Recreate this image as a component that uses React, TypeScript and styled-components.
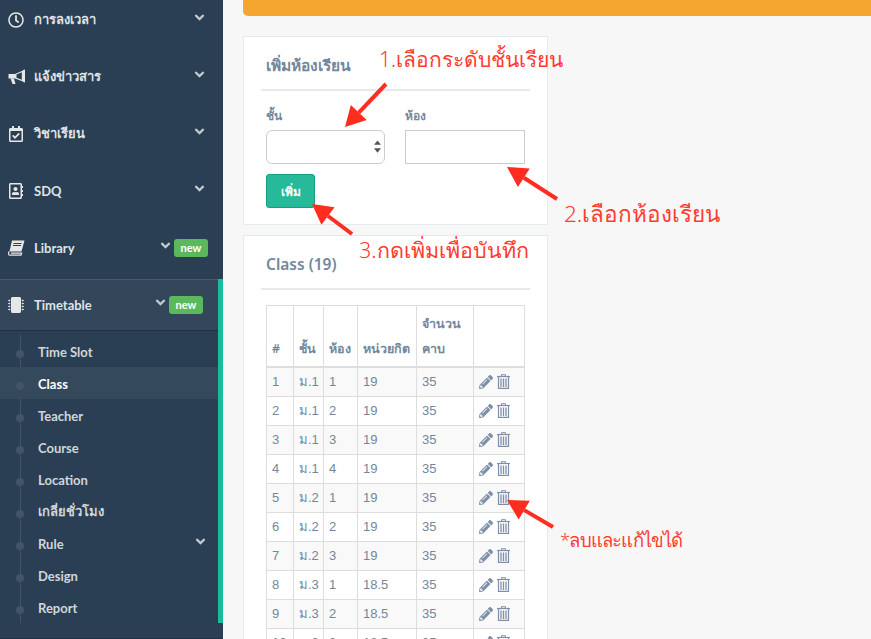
import styled, { createGlobalStyle } from 'styled-components';
import { FaAngleDown, FaMicrochip, FaPencilAlt, FaRegAddressBook, FaRegCalendarCheck, FaRegClock } from 'react-icons/fa';

const FONT = '"Noto Sans", "Open Sans", "Liberation Sans", sans-serif';
const NAV_FONT = 'Lato, "Noto Sans", sans-serif';
const TABLE_FONT = '"Liberation Sans", "Noto Sans", sans-serif';

const BullhornIcon = () => (
	<svg width='18' height='16' viewBox='0 0 18 16' fill='none'>
		<path d='M0.5 5 H7 L15 1.5 V12.5 L7 9.5 H0.5 Z' fill='#e7e7e7' />
		<path d='M2.5 9.5 H6 L7.5 15 H4.5 Z' fill='#e7e7e7' />
		<path d='M8.5 5.5 L13.8 3.2 V10.8 L8.5 8.8 Z' fill='#2a3f54' />
		<path d='M15 1 L17 0.5 V13.5 L15 13 Z' fill='#e7e7e7' />
	</svg>
);

const BookIcon = () => (
	<svg width='17' height='16' viewBox='0 0 17 16' fill='none'>
		<path d='M4 0.5 H16.5 L13.5 11.5 H1.5 Z' fill='#e7e7e7' />
		<path d='M5.5 3.5 H13.5 M5 5.5 H13' stroke='#2a3f54' strokeWidth='1' />
		<path d='M1.5 11.5 C0 12.5 0.2 15.2 2 15.2 H13 L13.6 13.2 H3' stroke='#e7e7e7' strokeWidth='1.2' />
	</svg>
);

const TrashIcon = () => (
	<svg width='13' height='15' viewBox='0 0 13 15' fill='none' stroke='currentColor'>
		<path d='M0 2.5 H13' strokeWidth='1.2' />
		<path d='M4.5 2.5 V0.7 H8.5 V2.5' strokeWidth='1' />
		<path d='M1.5 3 V14.3 H11.5 V3' strokeWidth='1.2' />
		<path d='M4 4.5 V13 M6.5 4.5 V13 M9 4.5 V13' strokeWidth='1.3' />
	</svg>
);

const menu = [
	{ label: 'การลงเวลา', icon: <FaRegClock /> },
	{ label: 'แจ้งข่าวสาร', icon: <BullhornIcon /> },
	{ label: 'วิชาเรียน', icon: <FaRegCalendarCheck /> },
	{ label: 'SDQ', icon: <FaRegAddressBook /> },
	{ label: 'Library', icon: <BookIcon />, isNew: true },
];

const subMenu = ['Time Slot', 'Class', 'Teacher', 'Course', 'Location', 'เกลี่ยชั่วโมง', 'Rule', 'Design', 'Report'];

const rows = [
	[1, 'ม.1', 1, 19],
	[2, 'ม.1', 2, 19],
	[3, 'ม.1', 3, 19],
	[4, 'ม.1', 4, 19],
	[5, 'ม.2', 1, 19],
	[6, 'ม.2', 2, 19],
	[7, 'ม.2', 3, 19],
	[8, 'ม.3', 1, 18.5],
	[9, 'ม.3', 2, 18.5],
	[10, 'ม.3', 3, 18.5],
];

const arrows = [
	{ x1: 386, y1: 84, x2: 345, y2: 127 },
	{ x1: 557, y1: 199, x2: 507, y2: 167 },
	{ x1: 352, y1: 234, x2: 312, y2: 204 },
	{ x1: 553, y1: 527, x2: 507, y2: 500 },
];

const Arrow = ({ x1, y1, x2, y2 }: { x1: number; y1: number; x2: number; y2: number }) => {
	const angle = Math.atan2(y2 - y1, x2 - x1);
	const ux = Math.cos(angle);
	const uy = Math.sin(angle);
	const bx = x2 - ux * 20;
	const by = y2 - uy * 20;
	return (
		<g>
			<line x1={x1} y1={y1} x2={bx} y2={by} stroke='#ff2d20' strokeWidth='4' />
			<polygon
				points={`${x2},${y2} ${bx - uy * 11},${by + ux * 11} ${bx + uy * 11},${by - ux * 11}`}
				fill='#ff2d20'
			/>
		</g>
	);
};

const App = () => {
	return (
		<>
			<GlobalStyle />
			<Page>
				<Sidebar>
					<TopMenu>
						{menu.map((item) => (
							<MenuItem key={item.label}>
								<MenuIcon>{item.icon}</MenuIcon>
								<MenuLabel>{item.label}</MenuLabel>
								<Chevron>
									<FaAngleDown />
								</Chevron>
								{item.isNew && <NewBadge>new</NewBadge>}
							</MenuItem>
						))}
					</TopMenu>
					<ActiveGroup>
						<ActiveItem>
							<MenuIcon>
								<FaMicrochip />
							</MenuIcon>
							<MenuLabel>Timetable</MenuLabel>
							<Chevron>
								<FaAngleDown />
							</Chevron>
							<NewBadge>new</NewBadge>
						</ActiveItem>
						<SubList>
							{subMenu.map((name) => (
								<SubItem key={name} $active={name === 'Class'}>
									{name}
									{name === 'Rule' && (
										<SubChevron>
											<FaAngleDown />
										</SubChevron>
									)}
								</SubItem>
							))}
						</SubList>
					</ActiveGroup>
				</Sidebar>

				<Main>
					<AlertBar />
					<Panel>
						<PanelTitle>เพิ่มห้องเรียน</PanelTitle>
						<FormRow>
							<Field>
								<FieldLabel>ชั้น</FieldLabel>
								<SelectWrap>
									<Select />
									<SelectArrows viewBox='0 0 8 14'>
										<path d='M4 0 L8 5 H0 Z M4 14 L0 9 H8 Z' fill='#555' />
									</SelectArrows>
								</SelectWrap>
							</Field>
							<Field>
								<FieldLabel>ห้อง</FieldLabel>
								<Input />
							</Field>
						</FormRow>
						<AddButton>เพิ่ม</AddButton>
					</Panel>
					<Panel>
						<PanelTitle>Class (19)</PanelTitle>
						<Table>
							<colgroup>
								<col width='27' />
								<col width='30' />
								<col width='34' />
								<col width='59' />
								<col width='57' />
								<col width='51' />
							</colgroup>
							<thead>
								<tr>
									<Th>#</Th>
									<Th>ชั้น</Th>
									<Th>ห้อง</Th>
									<Th>หน่วยกิต</Th>
									<Th>
										จำนวน
										<br />
										คาบ
									</Th>
									<Th />
								</tr>
							</thead>
							<tbody>
								{rows.map((row) => (
									<Tr key={row[0]}>
										{row.map((cell, i) => (
											<Td key={i}>{cell}</Td>
										))}
										<Td>35</Td>
										<Td>
											<Actions>
												<FaPencilAlt />
												<TrashIcon />
											</Actions>
										</Td>
									</Tr>
								))}
							</tbody>
						</Table>
					</Panel>
				</Main>

				<ArrowLayer viewBox='0 0 871 639'>
					{arrows.map((a) => (
						<Arrow key={a.x1} {...a} />
					))}
				</ArrowLayer>
				<Note $size={21} style={{ left: 379, top: 44 }}>
					1.เลือกระดับชั้นเรียน
				</Note>
				<Note $size={22.5} style={{ left: 564, top: 199 }}>
					2.เลือกห้องเรียน
				</Note>
				<Note $size={21.5} style={{ left: 359, top: 235 }}>
					3.กดเพิ่มเพื่อบันทึก
				</Note>
				<Note $size={18.5} $spacing={-0.8} style={{ left: 560, top: 525 }}>
					*ลบและแก้ไขได้
				</Note>
			</Page>
		</>
	);
};

const GlobalStyle = createGlobalStyle`
	html, body {
		margin: 0;
		padding: 0;
		background: #f7f7f7;
	}
	* {
		box-sizing: border-box;
	}
`;

const Page = styled.div`
	position: relative;
	display: flex;
	width: 871px;
	height: 639px;
	overflow: hidden;
	font-family: ${FONT};
	background: #f7f7f7;
`;

const Sidebar = styled.aside`
	flex: 0 0 223px;
	height: 639px;
	background: #2a3f54;
	border-bottom: 1px solid #1f3044;
	overflow: hidden;
	font-family: ${NAV_FONT};
`;

const TopMenu = styled.nav`
	margin: -9px 0 3px;
`;

const MenuItem = styled.div`
	display: flex;
	align-items: center;
	height: 57px;
	padding: 0 15px 0 8px;
	color: #e7e7e7;
`;

const MenuIcon = styled.span`
	display: flex;
	flex: 0 0 18px;
	margin-right: 8px;
	font-size: 16px;
	color: #e7e7e7;
`;

const MenuLabel = styled.span`
	flex: 1;
	font-size: 13px;
	font-weight: 700;
	color: #dfe3e7;
`;

const Chevron = styled.span`
	display: flex;
	margin: -5px 1px 0 0;
	font-size: 15px;
	color: #c3cad1;
`;

const NewBadge = styled.span`
	width: 34px;
	height: 18px;
	border-radius: 3px;
	background: #5cb85c;
	color: #fff;
	font-size: 11px;
	font-weight: 700;
	line-height: 17px;
	text-align: center;
`;

const ActiveGroup = styled.div`
	border-right: 5px solid #1abb9c;
`;

const ActiveItem = styled(MenuItem)`
	height: 52px;
	padding-right: 15px;
	background: #33465a;
	border-top: 1px solid #4a5a6a;
	border-bottom: 1px solid #1f3044;
`;

const SubList = styled.div`
	position: relative;
	padding-top: 4px;
	&::before {
		content: '';
		position: absolute;
		left: 20px;
		top: 4px;
		bottom: 0;
		width: 1px;
		background: #425466;
	}
`;

const SubItem = styled.div<{ $active?: boolean }>`
	position: relative;
	display: flex;
	align-items: center;
	justify-content: space-between;
	height: 32px;
	padding: 1px 10px 0 38px;
	background: ${(p) => (p.$active ? '#34495c' : 'transparent')};
	color: ${(p) => (p.$active ? '#ffffff' : '#d1d6db')};
	font-size: 13px;
	font-weight: 700;
	&::before {
		content: '';
		position: absolute;
		left: 16px;
		top: 15px;
		width: 8px;
		height: 8px;
		border-radius: 50%;
		background: #425466;
	}
`;

const SubChevron = styled.span`
	display: flex;
	margin-top: -5px;
	font-size: 15px;
	color: #c3cad1;
`;

const Main = styled.main`
	flex: 0 0 305px;
	width: 305px;
	min-width: 0;
	margin-left: 20px;
	display: flex;
	flex-direction: column;
`;

const AlertBar = styled.div`
	flex: 0 0 16px;
	width: 628px;
	margin-bottom: 20px;
	background: #f5a62f;
	border-bottom-left-radius: 5px;
`;

const Panel = styled.section`
	flex: none;
	padding: 0 17px;
	margin-bottom: 10px;
	background: #fff;
	border: 1px solid #e6e9ed;
`;

const PanelTitle = styled.h2`
	display: flex;
	align-items: center;
	height: 54px;
	margin: 0;
	padding: 4px 0 0 5px;
	border-bottom: 2px solid #e6e9ed;
	font-size: 15.5px;
	font-weight: 600;
	color: #73879c;
`;

const FormRow = styled.div`
	display: flex;
	gap: 20px;
	padding: 13px 0 0 5px;
`;

const Field = styled.div`
	display: flex;
	flex-direction: column;
`;

const FieldLabel = styled.label`
	height: 26px;
	font-size: 12px;
	font-weight: 700;
	line-height: 24px;
	color: #73879c;
`;

const SelectWrap = styled.div`
	position: relative;
	width: 119px;
`;

const Select = styled.select`
	display: block;
	width: 100%;
	height: 34px;
	appearance: none;
	background: #fff;
	border: 1px solid #ccc;
	border-radius: 6px;
`;

const SelectArrows = styled.svg`
	position: absolute;
	right: 4px;
	top: 10px;
	width: 7px;
	height: 13px;
`;

const Input = styled.input`
	display: block;
	width: 120px;
	height: 34px;
	background: #fff;
	border: 1px solid #ccc;
	border-radius: 0;
	outline: none;
`;

const AddButton = styled.button`
	display: block;
	width: 49px;
	height: 34px;
	margin: 10px 0 16px 5px;
	padding: 0;
	background: #26b99a;
	border: 1px solid #169f85;
	border-radius: 3px;
	color: #fff;
	font-family: ${FONT};
	font-size: 12px;
	font-weight: 700;
`;

const Table = styled.table`
	width: 258px;
	margin: 15px 0 0 5px;
	border-collapse: collapse;
	table-layout: fixed;
	font-family: ${TABLE_FONT};
	font-size: 13px;
	color: #73879c;
`;

const Th = styled.th`
	padding: 5px;
	border: 1px solid #ddd;
	border-bottom-width: 2px;
	font-family: ${FONT};
	font-size: 12.5px;
	font-weight: 600;
	line-height: 25px;
	text-align: left;
	vertical-align: bottom;
	white-space: nowrap;
`;

const Tr = styled.tr`
	height: 29px;
	&:nth-child(odd) {
		background: #f9f9f9;
	}
`;

const Td = styled.td`
	padding: 0 5px;
	border: 1px solid #ddd;
	white-space: nowrap;
`;

const Actions = styled.div`
	display: flex;
	align-items: center;
	gap: 4px;
	font-size: 14px;
	color: #7d90a8;
`;

const ArrowLayer = styled.svg`
	position: absolute;
	left: 0;
	top: 0;
	width: 871px;
	height: 639px;
	pointer-events: none;
`;

const Note = styled.span<{ $size: number; $spacing?: number }>`
	position: absolute;
	font-size: ${(p) => p.$size}px;
	font-weight: 300;
	letter-spacing: ${(p) => p.$spacing ?? 0}px;
	line-height: 30px;
	white-space: nowrap;
	color: #ff3b30;
`;

export default App;
